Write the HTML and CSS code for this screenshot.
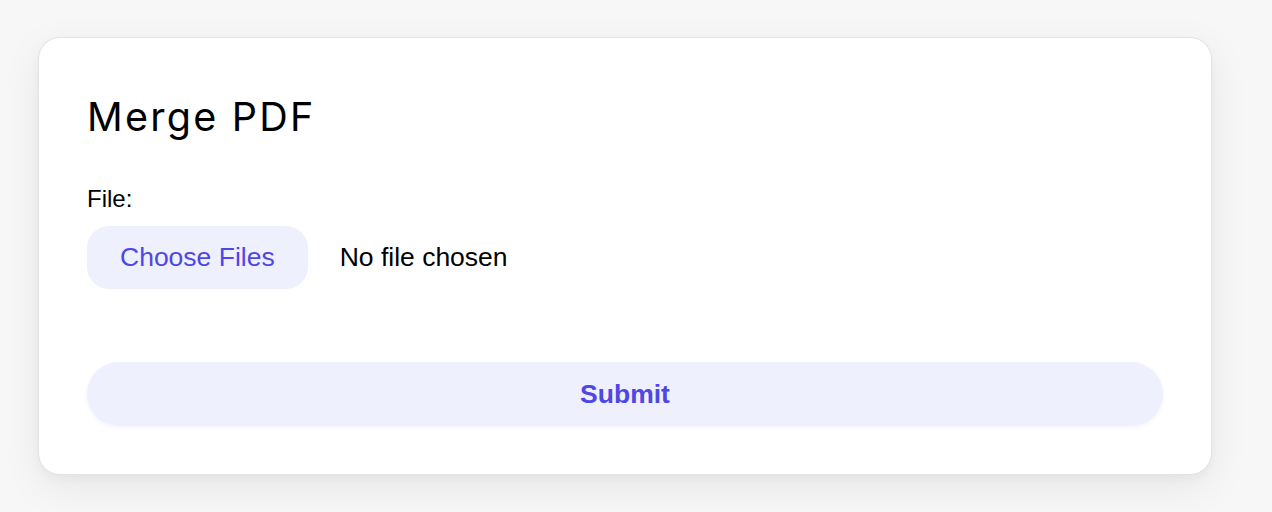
FILE: index.html
```html
<!DOCTYPE html>
<html lang="en">
<head>
<meta charset="utf-8">
<title>Merge PDF</title>
<link rel="stylesheet" href="styles.css">
</head>
<body>
<main class="page">
  <section class="card">
    <h1 class="title">Merge PDF</h1>
    <form class="form">
      <label class="label">File:</label>
      <div class="file-row">
        <span class="choose-btn">Choose Files</span>
        <span class="file-status">No file chosen</span>
      </div>
      <button type="button" class="submit">Submit</button>
    </form>
  </section>
</main>
</body>
</html>
```

FILE: styles.css
```css
html, body {
  margin: 0;
  padding: 0;
  background: #f7f7f7;
}
.page {
  padding: 37px 60px 37px 38px;
}
.card {
  background: #ffffff;
  border: 1px solid #e3e3e6;
  border-radius: 22px;
  padding: 48px;
  box-shadow: 0 12px 40px rgba(0, 0, 0, 0.07), 0 4px 10px rgba(0, 0, 0, 0.03);
}
.title {
  margin: 0;
  font-family: Inter, "Noto Sans", sans-serif;
  font-weight: 400;
  font-size: 39.5px;
  line-height: 62px;
  letter-spacing: 0.057em;
  color: #000;
}
.form {
  display: flex;
  flex-direction: column;
  margin-top: 35px;
}
.label {
  font-family: "Liberation Sans", Arial, sans-serif;
  font-size: 24px;
  line-height: 32px;
  color: #000;
}
.file-row {
  display: flex;
  align-items: center;
  gap: 32px;
  margin-top: 11px;
  font-family: "Liberation Sans", Arial, sans-serif;
  font-size: 26.5px;
}
.choose-btn {
  background: #eef0fd;
  color: #4f46e5;
  border-radius: 22px;
  padding: 16px 33px;
  line-height: 31px;
}
.file-status {
  color: #000;
}
.submit {
  margin-top: 73px;
  height: 64px;
  border: none;
  border-radius: 32px;
  background: #eef0fd;
  color: #4f46e5;
  font-family: "Liberation Sans", Arial, sans-serif;
  font-weight: 700;
  font-size: 26.5px;
  box-shadow: 0 2px 4px rgba(79, 70, 229, 0.06);
  cursor: pointer;
}
```
